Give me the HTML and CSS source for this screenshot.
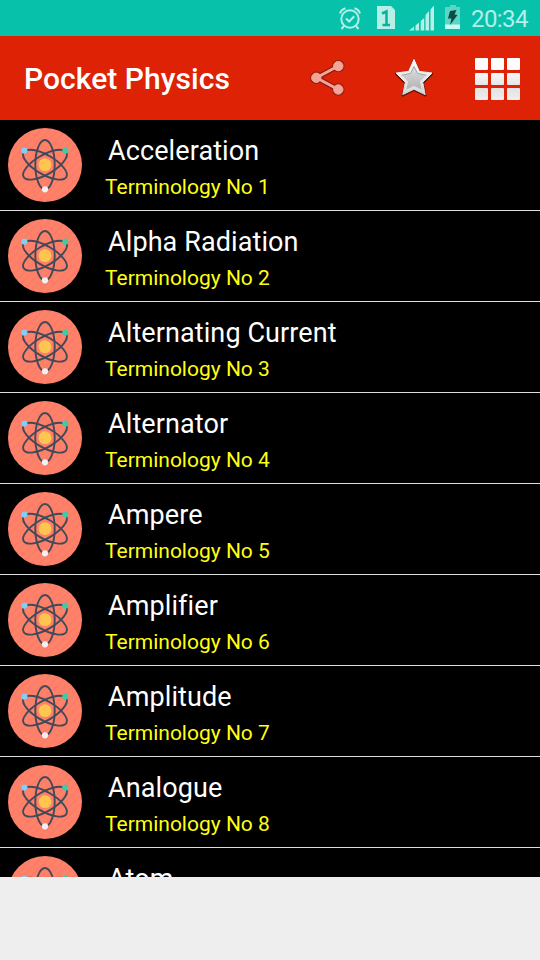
FILE: index.html
```html
<!DOCTYPE html>
<html lang="en">
<head>
    <meta charset="UTF-8">
    <meta name="viewport" content="width=device-width, initial-scale=1.0">
    <title>Pocket Physics</title>

    <link rel="stylesheet" href="styles.css">
</head>
<body>
    <!-- atom picture shared by all rows -->
    <svg class="defs" width="0" height="0">
        <defs>
            <pattern id="stripes" width="6" height="6" patternUnits="userSpaceOnUse" patternTransform="rotate(45)">
                <rect width="6" height="6" fill="#ff8169"/>
                <rect width="2" height="6" fill="#fa7e67"/>
            </pattern>
        </defs>
        <symbol id="atom" viewBox="0 0 74 74">
            <circle cx="37" cy="37" r="37" fill="url(#stripes)"/>
            <circle cx="37" cy="36.7" r="6.4" fill="#ffc64f"/>
            <g fill="none" stroke="#424959" stroke-width="1.9">
                <ellipse cx="37" cy="36.7" rx="9.7" ry="24.7"/>
                <ellipse cx="37" cy="36.7" rx="9.7" ry="24.7" transform="rotate(60 37 36.7)"/>
                <ellipse cx="37" cy="36.7" rx="9.7" ry="24.7" transform="rotate(-60 37 36.7)"/>
            </g>
            <circle cx="16.4" cy="22.6" r="3.1" fill="#84cdf5"/>
            <circle cx="57.3" cy="22.6" r="3.1" fill="#41cba5"/>
            <circle cx="37" cy="61.3" r="3.1" fill="#f3eff2"/>
        </symbol>
    </svg>

    <div class="status-bar">
        <svg class="alarm" width="24" height="26" viewBox="0 0 24 26" fill="none" stroke="#b5efe6" stroke-width="2">
            <circle cx="12" cy="14" r="8.7"/>
            <path d="M8 13.5l3.2 3 5-5.2M2 8.5Q3 4.5 7.5 3.2M22 8.5Q21 4.5 16.5 3.2M6 21l-2.5 3M18 21l2.5 3"/>
        </svg>
        <svg class="sim" width="20" height="24" viewBox="0 0 20 24">
            <path d="M1 0h14l4 4v19H1z" fill="#b5efe6"/>
            <path d="M6 7.5l4.5-2V19M6.5 19H14" fill="none" stroke="#07b29d" stroke-width="2.5"/>
        </svg>
        <svg class="signal" width="26" height="26" viewBox="0 0 26 26" fill="#b5efe6">
            <path d="M0 25.5l5-4v4zM6.5 20.5l3.5-3v8H6.5zM11.700 16l3.5-3v12.5h-3.5zM16.5 10l3.5-4v19.5h-3.5zM21.5 4.5l3.5-4v25h-3.5z"/>
        </svg>
        <svg class="battery" width="16" height="24" viewBox="0 0 16 24">
            <path d="M5 0h6v2h4v22H0V2h5z" fill="#5bd5c5"/>
            <path d="M0 19.5h15V24H0z" fill="#c9f8f0"/>
            <path d="M5 6l6.5-1L9.500 9.5l3 .5L5 20l1.5-6.5H3z" fill="#0c4a43"/>
        </svg>
        <span class="clock">20:34</span>
    </div>

    <div class="action-bar">
        <h1 class="app-title">Pocket Physics</h1>
        <svg class="share" width="36" height="40" viewBox="0 0 36 40">
            <g fill="#8c2014" stroke="#8c2014" stroke-width="5.4">
                <path d="M28.3 8.1L6.3 19.8l22 11.7" fill="none"/>
                <g stroke-width="1.6">
                    <circle cx="28.3" cy="8.1" r="5.4"/>
                    <circle cx="6.3" cy="19.8" r="5.4"/>
                    <circle cx="28.3" cy="31.5" r="5.4"/>
                </g>
            </g>
            <g fill="#f4a598" stroke="#f4a598">
                <path d="M28.3 8.1L6.3 19.8l22 11.7" fill="none" stroke-width="2.8"/>
                <circle cx="28.3" cy="8.1" r="4.7"/>
                <circle cx="6.3" cy="19.8" r="4.7"/>
                <circle cx="28.3" cy="31.5" r="4.7"/>
            </g>
        </svg>
        <svg class="star" width="42" height="42" viewBox="0 0 42 42">
            <defs>
                <linearGradient id="rim" x2="0" y2="1">
                    <stop offset="0" stop-color="#ffffff"/>
                    <stop offset="1" stop-color="#d5d5d5"/>
                </linearGradient>
                <linearGradient id="inner" x2="0" y2="1">
                    <stop offset="0" stop-color="#e0e0e0"/>
                    <stop offset="1" stop-color="#b2b2b2"/>
                </linearGradient>
            </defs>
            <path d="M21 3.4L26.6 15.3 39.2 16.8 30 26.3 32.6 38.6 21 33 9.7 38.6 12.3 26.3 2.9 16.8 15.7 15.3z" fill="#63150b" stroke="#63150b" stroke-width="2" stroke-linejoin="round"/>
            <path d="M21 2.5L26.4 14.4 39 16 29.7 25.3 32.2 37.6 21 32.2 9.8 37.6 12.3 25.3 3 16 15.6 14.4z" fill="url(#rim)" stroke="url(#rim)" stroke-linejoin="round"/>
            <path d="M21 9.5L24.6 17 33 18.4 26.9 24.5 28.6 32.5 21 28.7 13.4 32.5 15.1 24.5 9 18.4 17.4 17z" fill="url(#inner)"/>
            <path d="M8.5 18.2L17.4 16.5 21 9.5l3.6 7 8.900 1.7" fill="none" stroke="#839298" stroke-width=".8"/>
        </svg>
        <div class="grid">
            <span></span><span></span><span></span>
            <span></span><span></span><span></span>
            <span></span><span></span><span></span>
        </div>
    </div>

    <div class="list">
        <div class="row">
            <svg class="icon"><use href="#atom"/></svg>
            <div class="text">
                <div class="term">Acceleration</div>
                <div class="number">Terminology No 1</div>
            </div>
        </div>
        <div class="row">
            <svg class="icon"><use href="#atom"/></svg>
            <div class="text">
                <div class="term">Alpha Radiation</div>
                <div class="number">Terminology No 2</div>
            </div>
        </div>
        <div class="row">
            <svg class="icon"><use href="#atom"/></svg>
            <div class="text">
                <div class="term">Alternating Current</div>
                <div class="number">Terminology No 3</div>
            </div>
        </div>
        <div class="row">
            <svg class="icon"><use href="#atom"/></svg>
            <div class="text">
                <div class="term">Alternator</div>
                <div class="number">Terminology No 4</div>
            </div>
        </div>
        <div class="row">
            <svg class="icon"><use href="#atom"/></svg>
            <div class="text">
                <div class="term">Ampere</div>
                <div class="number">Terminology No 5</div>
            </div>
        </div>
        <div class="row">
            <svg class="icon"><use href="#atom"/></svg>
            <div class="text">
                <div class="term">Amplifier</div>
                <div class="number">Terminology No 6</div>
            </div>
        </div>
        <div class="row">
            <svg class="icon"><use href="#atom"/></svg>
            <div class="text">
                <div class="term">Amplitude</div>
                <div class="number">Terminology No 7</div>
            </div>
        </div>
        <div class="row">
            <svg class="icon"><use href="#atom"/></svg>
            <div class="text">
                <div class="term">Analogue</div>
                <div class="number">Terminology No 8</div>
            </div>
        </div>
        <div class="row">
            <svg class="icon"><use href="#atom"/></svg>
            <div class="text">
                <div class="term">Atom</div>
            </div>
        </div>
    </div>
</body>
</html>
```

FILE: styles.css
```css
body {
    margin: 0;
    height: 960px;
    overflow: hidden;
    background: #eeeeee;
    font-family: Roboto, sans-serif;
}
svg {
    display: block;
    flex: none;
}
.defs {
    height: 0;
}
.status-bar {
    display: flex;
    align-items: flex-start;
    height: 36px;
    padding-left: 338px;
    background: #07c1ab;
}
.alarm {
    margin-top: 5px;
}
.sim {
    margin: 6px 0 0 14px;
}
.signal {
    margin: 5px 0 0 13px;
}
.battery {
    margin: 5px 0 0 10px;
}
.clock {
    margin-left: 10px;
    color: #b5efe6;
    font-size: 24px;
    letter-spacing: -0.6px;
    line-height: 38px;
}
.action-bar {
    display: flex;
    align-items: center;
    height: 84px;
    background: #dd2205;
}
.app-title {
    width: 286px;
    margin: 2px 0 0 24px;
    color: #fff;
    font-size: 30px;
    font-weight: 500;
    letter-spacing: 0.05px;
    line-height: 36px;
}
.star {
    margin-left: 47px;
}
.grid {
    display: grid;
    grid-template-columns: repeat(3, 13px);
    grid-template-rows: repeat(3, 12px);
    gap: 3px;
    margin: 1px 0 0 40px;
}
.grid span {
    border-radius: 1px;
    background: linear-gradient(#fff, #fafafa);
}
.grid span:nth-child(n+4) {
    background: linear-gradient(#f8f8f8, #e6e6e6);
}
.grid span:nth-child(n+7) {
    background: linear-gradient(#e2e2e2, #eeeeee);
}
.list {
    height: 757px;
    overflow: hidden;
    background: #000;
}
.row {
    display: flex;
    height: 90px;
    padding-left: 8px;
    border-bottom: 1px solid #dddddd;
}
.icon {
    width: 74px;
    height: 74px;
    margin-top: 8px;
}
.text {
    padding: 13px 0 0 23px;
}
.term {
    padding-left: 3px;
    color: #fff;
    font-size: 27px;
    letter-spacing: 0.1px;
    line-height: 36px;
}
.number {
    color: #ffff10;
    font-size: 21px;
    line-height: 36px;
}
```
